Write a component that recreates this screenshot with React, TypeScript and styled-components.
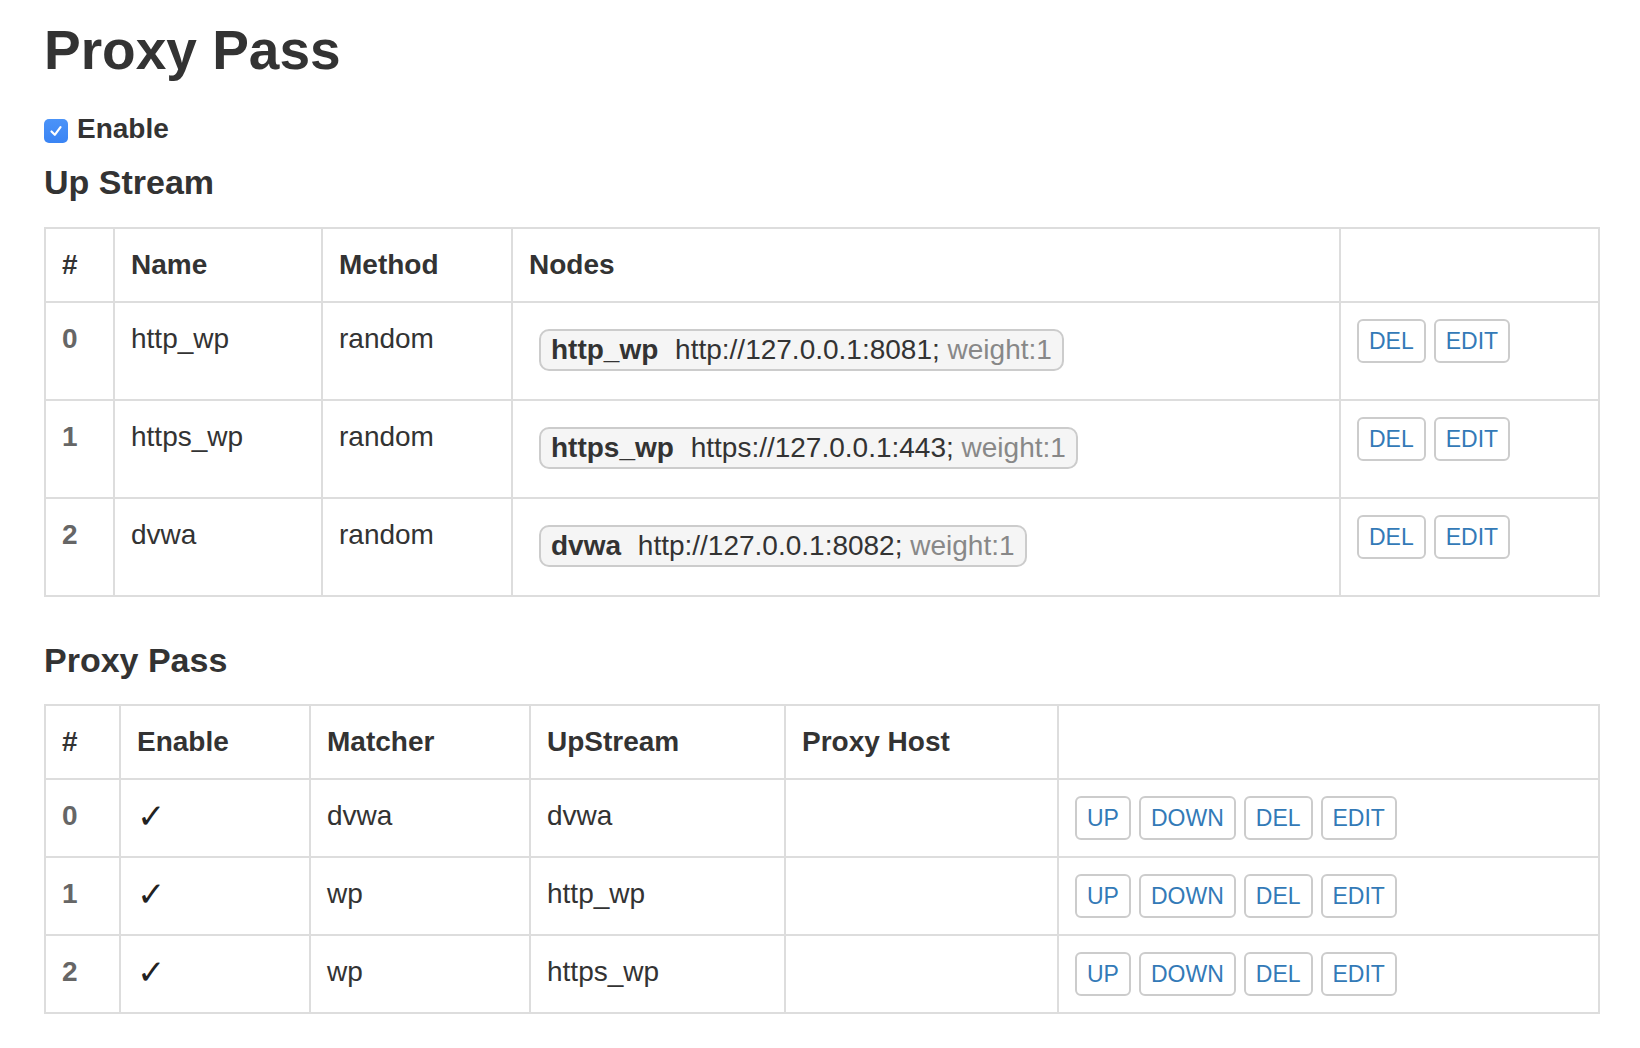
import React from "react";
import styled, { createGlobalStyle } from "styled-components";

const GlobalStyle = createGlobalStyle`
  html, body { margin: 0; padding: 0; background: #fff; }
  body {
    font-family: "Liberation Sans", Helvetica, Arial, sans-serif;
    color: #333;
    font-size: 28px;
    line-height: 40px;
  }
`;

const Page = styled.div`
  padding: 20px 42px 40px 44px;
`;

const Title = styled.h1`
  margin: 0;
  font-size: 55px;
  line-height: 60px;
  font-weight: 700;
  color: #333;
`;

const EnableRow = styled.label`
  display: flex;
  align-items: center;
  gap: 9px;
  margin-top: 29px;
  font-weight: 700;
  font-size: 28px;
  line-height: 40px;
`;

const CheckBox = styled.span`
  width: 24px;
  height: 24px;
  margin-top: 4px;
  border-radius: 5px;
  background: linear-gradient(#4b93f8, #3a84f4);
  display: flex;
  align-items: center;
  justify-content: center;
`;

const SectionTitle = styled.h3<{ $top: number; $bottom: number }>`
  margin: ${(p) => p.$top}px 0 ${(p) => p.$bottom}px;
  font-size: 34px;
  line-height: 40px;
  font-weight: 700;
  color: #333;
`;

const Table = styled.table`
  width: 1554px;
  border-collapse: collapse;
  table-layout: fixed;
  border: 2px solid #ddd;
`;

const Th = styled.th`
  padding: 16px;
  border: 2px solid #ddd;
  text-align: left;
  font-weight: 700;
  vertical-align: bottom;
  line-height: 40px;
  color: #333;
`;

const Td = styled.td<{ $num?: boolean }>`
  padding: 16px;
  border: 2px solid #ddd;
  vertical-align: top;
  line-height: 40px;
  font-weight: ${(p) => (p.$num ? 700 : 400)};
  color: ${(p) => (p.$num ? "#666" : "#333")};
  white-space: nowrap;
`;

const Node = styled.span`
  display: inline-block;
  vertical-align: top;
  margin: 10px 0 12px 10px;
  padding: 0 10px;
  border: 2px solid #ccc;
  border-radius: 10px;
  background: #f5f5f5;
  line-height: 38px;
  white-space: nowrap;
`;

const NodeName = styled.b`
  font-weight: 700;
  margin-right: 9px;
`;

const Weight = styled.span`
  color: #888;
`;

const Actions = styled.div`
  display: flex;
  gap: 8px;
`;

const Btn = styled.button`
  font-family: inherit;
  font-size: 23px;
  line-height: 36px;
  padding: 2px 10px;
  border: 2px solid #ccc;
  border-radius: 6px;
  background: #fff;
  color: #337ab7;
  cursor: pointer;
`;

const Check = styled.span`
  display: inline-block;
  vertical-align: top;
  height: 40px;
  line-height: 40px;
  font-family: "DejaVu Sans", sans-serif;
  font-size: 34px;
  font-weight: 700;
  color: #222;
`;

const upstreams = [
  { name: "http_wp", method: "random", url: "http://127.0.0.1:8081;" },
  { name: "https_wp", method: "random", url: "https://127.0.0.1:443;" },
  { name: "dvwa", method: "random", url: "http://127.0.0.1:8082;" },
];

const passes = [
  { matcher: "dvwa", upstream: "dvwa" },
  { matcher: "wp", upstream: "http_wp" },
  { matcher: "wp", upstream: "https_wp" },
];

export default function App() {
  return (
    <>
      <GlobalStyle />
      <Page>
        <Title>Proxy Pass</Title>
        <EnableRow>
          <CheckBox>
            <svg width="16" height="16" viewBox="0 0 16 16">
              <path d="M3.5 8.5 L6.8 11.8 L12.5 4.2" fill="none" stroke="#fff" strokeWidth="2.2" strokeLinecap="round" strokeLinejoin="round" />
            </svg>
          </CheckBox>
          Enable
        </EnableRow>

        <SectionTitle $top={13} $bottom={25}>Up Stream</SectionTitle>
        <Table>
          <colgroup>
            <col style={{ width: 69 }} />
            <col style={{ width: 208 }} />
            <col style={{ width: 190 }} />
            <col style={{ width: 828 }} />
            <col style={{ width: 259 }} />
          </colgroup>
          <thead>
            <tr>
              <Th>#</Th>
              <Th>Name</Th>
              <Th>Method</Th>
              <Th>Nodes</Th>
              <Th></Th>
            </tr>
          </thead>
          <tbody>
            {upstreams.map((u, i) => (
              <tr key={i}>
                <Td $num>{i}</Td>
                <Td>{u.name}</Td>
                <Td>{u.method}</Td>
                <Td>
                  <Node>
                    <NodeName>{u.name}</NodeName> {u.url} <Weight>weight:1</Weight>
                  </Node>
                </Td>
                <Td>
                  <Actions>
                    <Btn>DEL</Btn>
                    <Btn>EDIT</Btn>
                  </Actions>
                </Td>
              </tr>
            ))}
          </tbody>
        </Table>

        <SectionTitle $top={43} $bottom={24}>Proxy Pass</SectionTitle>
        <Table>
          <colgroup>
            <col style={{ width: 75 }} />
            <col style={{ width: 190 }} />
            <col style={{ width: 220 }} />
            <col style={{ width: 255 }} />
            <col style={{ width: 273 }} />
            <col style={{ width: 541 }} />
          </colgroup>
          <thead>
            <tr>
              <Th>#</Th>
              <Th>Enable</Th>
              <Th>Matcher</Th>
              <Th>UpStream</Th>
              <Th>Proxy Host</Th>
              <Th></Th>
            </tr>
          </thead>
          <tbody>
            {passes.map((p, i) => (
              <tr key={i}>
                <Td $num>{i}</Td>
                <Td>
                  <Check>✓</Check>
                </Td>
                <Td>{p.matcher}</Td>
                <Td>{p.upstream}</Td>
                <Td></Td>
                <Td>
                  <Actions>
                    <Btn>UP</Btn>
                    <Btn>DOWN</Btn>
                    <Btn>DEL</Btn>
                    <Btn>EDIT</Btn>
                  </Actions>
                </Td>
              </tr>
            ))}
          </tbody>
        </Table>
      </Page>
    </>
  );
}
